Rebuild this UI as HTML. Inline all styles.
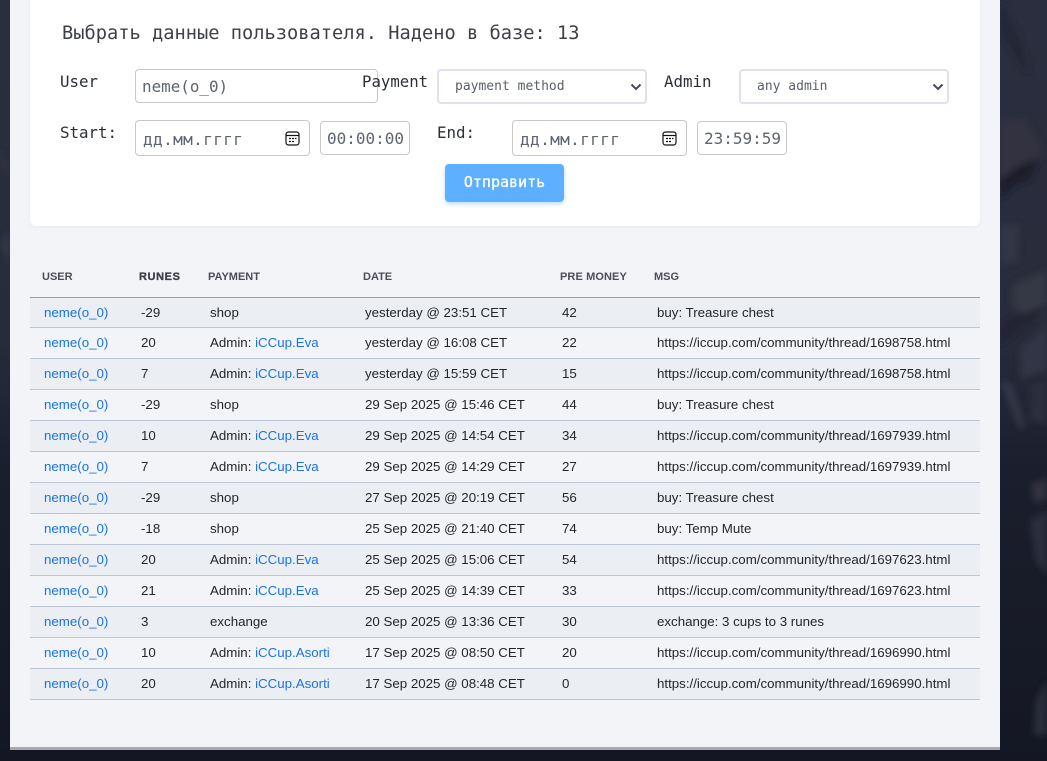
<!DOCTYPE html>
<html><head><meta charset="utf-8">
<style>
html,body{margin:0;padding:0;width:1047px;height:761px;overflow:hidden;background:#171a27}
*{box-sizing:border-box}
.a{position:absolute;white-space:nowrap}
.m{font-family:"DejaVu Sans Mono","Liberation Mono","Noto Sans CJK SC",monospace}
.l{font-size:15.8px;color:#2c3038;line-height:20px;z-index:5}
.f{background:#fff;border:1px solid #c8c8cc;border-radius:4px;color:#5e6470;font-size:15.9px;display:flex;align-items:center;padding-left:6px}
.dt{font-size:16px;letter-spacing:.4px;padding:2px 0 0 7px}
.s{background:#fff;border:2px solid #dfe2ee;border-radius:4px;color:#5a606c;font-size:13px;display:flex;align-items:center;padding:0 0 0 16px}
.s svg{position:absolute;right:2px;top:11px}
.f svg{position:absolute;right:9px;top:10px}
.row{position:absolute;left:30px;width:950px;height:31px;border-bottom:1px solid #bcc6d6;font:13.3px/1 "Liberation Sans",Arial,sans-serif;color:#23262b}
.row span{position:absolute;top:8px;white-space:nowrap}
.o{background:#ebeef3}
.e{background:#f2f4f8}
.u{left:14px;color:#1a73e8}
.r{left:111px}.p{left:180px}.d{left:335px}.pm{left:532px}.g{left:627px}
b.n{font-weight:normal;color:#1a73e8}
.h{position:absolute;top:271px;font:bold 11px/11px "Liberation Sans",Arial,sans-serif;color:#4a4e57;white-space:nowrap}
</style></head><body>
<svg class="a" style="left:0;top:0" width="1047" height="761" viewBox="0 0 1047 761">
<defs>
<linearGradient id="g" x1="0" y1="0" x2="0" y2="1"><stop offset="0" stop-color="#2b2e3e"/><stop offset=".45" stop-color="#282b3a"/><stop offset=".62" stop-color="#1b1e2c"/><stop offset="1" stop-color="#141723"/></linearGradient>
<filter id="b" x="-20%" y="-20%" width="140%" height="140%"><feGaussianBlur stdDeviation="3.5"/></filter>
</defs>
<rect width="1047" height="761" fill="url(#g)"/>
<g filter="url(#b)">
<path d="M1000 0 L1020 40 L1030 75 L1018 60 L1000 30Z" fill="#222534"/>
<path d="M1000 120 L1025 118 L1044 150 L1040 160 L1025 170 L1005 190 L1000 195Z" fill="#30333f"/>
<path d="M1000 180 L1020 165 L1040 158 L1030 180 L1015 185 L1000 200Z" fill="#1d1f2c"/>
<path d="M1000 225 L1020 225 L1018 262 L1000 265Z" fill="#323543"/>
<path d="M1012 285 L1047 270 L1047 315 L1030 320 L1012 305Z" fill="#343745"/>
<path d="M1000 325 L1020 315 L1047 305 L1047 310 L1025 325 L1000 345Z" fill="#212332"/>
<path d="M1020 350 L1047 325 L1047 370 L1020 380Z" fill="#333644"/>
<path d="M1000 380 L1012 385 L1025 425 L1020 430 L1008 400Z" fill="#343748"/>
<path d="M1030 385 L1047 380 L1047 425 L1030 420Z" fill="#2c2f3d"/>
<path d="M1030 485 L1047 478 L1047 500 L1035 503Z" fill="#303341"/>
<path d="M1030 520 L1047 510 L1047 575 L1035 560Z" fill="#2c2f3d"/>
<path d="M1036 700 L1047 680 L1047 735 L1034 735Z" fill="#2c2f3d"/>
<path d="M0 150 L10 165 L10 175 L0 170Z" fill="#303341"/>
<path d="M0 245 L10 265 L10 230 Z" fill="#343745"/>
</g>
<rect x="0" y="749" width="1000" height="12" fill="#141723"/>
</svg>

<div class="a" style="left:10px;top:0;width:990px;height:747px;background:#f2f4f8"></div>
<div class="a" style="left:10px;top:747px;width:990px;height:3px;background:#a7a9af"></div>
<div class="a" style="left:30px;top:-10px;width:950px;height:236px;background:#fff;border-radius:6px;box-shadow:0 1px 3px rgba(60,70,100,.06)"></div>

<div class="a m" style="left:62px;top:22px;font-size:18.7px;line-height:23px;color:#3d4048">Выбрать данные пользователя. Надено в базе: 13</div>

<div class="a m l" style="left:60px;top:72px">User</div>
<div class="a m l" style="left:362px;top:72px;font-size:15.7px">Payment</div>
<div class="a m l" style="left:664px;top:72px">Admin</div>
<div class="a m l" style="left:60px;top:123px">Start:</div>
<div class="a m l" style="left:437px;top:123px">End:</div>

<div class="a m f" style="left:135px;top:69px;width:243px;height:34px">neme(o_0)</div>
<div class="a m s" style="left:437px;top:69px;width:210px;height:35px">payment method
<svg width="14" height="10" viewBox="0 0 14 10"><path d="M2.5 2.5 L7 7 L11.5 2.5" fill="none" stroke="#444a55" stroke-width="2"/></svg></div>
<div class="a m s" style="left:739px;top:69px;width:210px;height:35px">any admin
<svg width="14" height="10" viewBox="0 0 14 10"><path d="M2.5 2.5 L7 7 L11.5 2.5" fill="none" stroke="#444a55" stroke-width="2"/></svg></div>

<div class="a m f dt" style="left:135px;top:120px;width:175px;height:36px">дд.мм.гггг
<svg width="15" height="15" viewBox="0 0 15 15"><rect x="1" y="1" width="13" height="13" rx="2.5" fill="none" stroke="#111" stroke-width="1.2"/><path d="M1 4.5H14" stroke="#111" stroke-width="1.2"/><path d="M4 7.5h2M7 7.5h2M10 7.5h1.5M4 10.5h2M7 10.5h2" stroke="#111" stroke-width="1.3"/></svg></div>
<div class="a m f" style="left:320px;top:121px;width:90px;height:34px;font-size:16px">00:00:00</div>
<div class="a m f dt" style="left:512px;top:120px;width:175px;height:36px">дд.мм.гггг
<svg width="15" height="15" viewBox="0 0 15 15"><rect x="1" y="1" width="13" height="13" rx="2.5" fill="none" stroke="#111" stroke-width="1.2"/><path d="M1 4.5H14" stroke="#111" stroke-width="1.2"/><path d="M4 7.5h2M7 7.5h2M10 7.5h1.5M4 10.5h2M7 10.5h2" stroke="#111" stroke-width="1.3"/></svg></div>
<div class="a m f" style="left:697px;top:121px;width:90px;height:34px;font-size:16px">23:59:59</div>

<div class="a m" style="left:445px;top:164px;width:119px;height:38px;background:#5cb0ff;border-radius:4px;box-shadow:0 2px 5px rgba(90,170,255,.4);color:#fff;font-size:15px;line-height:37px;text-align:center;-webkit-text-stroke:.3px #fff">Отправить</div>

<div class="h" style="left:42px;top:272px">USER</div>
<div class="h" style="left:139px;top:272px;color:#3a3d45;letter-spacing:.6px;-webkit-text-stroke:.3px #3a3d45">RUNES</div>
<div class="h" style="left:208px;top:272px">PAYMENT</div>
<div class="h" style="left:363px;top:272px">DATE</div>
<div class="h" style="left:560px;top:272px;letter-spacing:.1px">PRE MONEY</div>
<div class="h" style="left:654px;top:272px">MSG</div>

<div class="row o" style="top:297px"><span class="u" style="top:9px">neme(o_0)</span><span class="r" style="top:9px">-29</span><span class="p" style="top:9px">shop</span><span class="d" style="top:9px">yesterday @ 23:51 CET</span><span class="pm" style="top:9px">42</span><span class="g" style="top:9px">buy: Treasure chest</span></div>
<div class="row e" style="top:328px"><span class="u">neme(o_0)</span><span class="r">20</span><span class="p">Admin: <b class="n">iCCup.Eva</b></span><span class="d">yesterday @ 16:08 CET</span><span class="pm">22</span><span class="g">https://iccup.com/community/thread/1698758.html</span></div>
<div class="row o" style="top:359px"><span class="u">neme(o_0)</span><span class="r">7</span><span class="p">Admin: <b class="n">iCCup.Eva</b></span><span class="d">yesterday @ 15:59 CET</span><span class="pm">15</span><span class="g">https://iccup.com/community/thread/1698758.html</span></div>
<div class="row e" style="top:390px"><span class="u">neme(o_0)</span><span class="r">-29</span><span class="p">shop</span><span class="d">29 Sep 2025 @ 15:46 CET</span><span class="pm">44</span><span class="g">buy: Treasure chest</span></div>
<div class="row o" style="top:421px"><span class="u">neme(o_0)</span><span class="r">10</span><span class="p">Admin: <b class="n">iCCup.Eva</b></span><span class="d">29 Sep 2025 @ 14:54 CET</span><span class="pm">34</span><span class="g">https://iccup.com/community/thread/1697939.html</span></div>
<div class="row e" style="top:452px"><span class="u">neme(o_0)</span><span class="r">7</span><span class="p">Admin: <b class="n">iCCup.Eva</b></span><span class="d">29 Sep 2025 @ 14:29 CET</span><span class="pm">27</span><span class="g">https://iccup.com/community/thread/1697939.html</span></div>
<div class="row o" style="top:483px"><span class="u">neme(o_0)</span><span class="r">-29</span><span class="p">shop</span><span class="d">27 Sep 2025 @ 20:19 CET</span><span class="pm">56</span><span class="g">buy: Treasure chest</span></div>
<div class="row e" style="top:514px"><span class="u">neme(o_0)</span><span class="r">-18</span><span class="p">shop</span><span class="d">25 Sep 2025 @ 21:40 CET</span><span class="pm">74</span><span class="g">buy: Temp Mute</span></div>
<div class="row o" style="top:545px"><span class="u">neme(o_0)</span><span class="r">20</span><span class="p">Admin: <b class="n">iCCup.Eva</b></span><span class="d">25 Sep 2025 @ 15:06 CET</span><span class="pm">54</span><span class="g">https://iccup.com/community/thread/1697623.html</span></div>
<div class="row e" style="top:576px"><span class="u">neme(o_0)</span><span class="r">21</span><span class="p">Admin: <b class="n">iCCup.Eva</b></span><span class="d">25 Sep 2025 @ 14:39 CET</span><span class="pm">33</span><span class="g">https://iccup.com/community/thread/1697623.html</span></div>
<div class="row o" style="top:607px"><span class="u">neme(o_0)</span><span class="r">3</span><span class="p">exchange</span><span class="d">20 Sep 2025 @ 13:36 CET</span><span class="pm">30</span><span class="g">exchange: 3 cups to 3 runes</span></div>
<div class="row e" style="top:638px"><span class="u">neme(o_0)</span><span class="r">10</span><span class="p">Admin: <b class="n">iCCup.Asorti</b></span><span class="d">17 Sep 2025 @ 08:50 CET</span><span class="pm">20</span><span class="g">https://iccup.com/community/thread/1696990.html</span></div>
<div class="row o" style="top:669px"><span class="u">neme(o_0)</span><span class="r">20</span><span class="p">Admin: <b class="n">iCCup.Asorti</b></span><span class="d">17 Sep 2025 @ 08:48 CET</span><span class="pm">0</span><span class="g">https://iccup.com/community/thread/1696990.html</span></div>
<div class="a" style="left:30px;top:297px;width:950px;height:1px;background:#9a9ea6"></div>
</body></html>
